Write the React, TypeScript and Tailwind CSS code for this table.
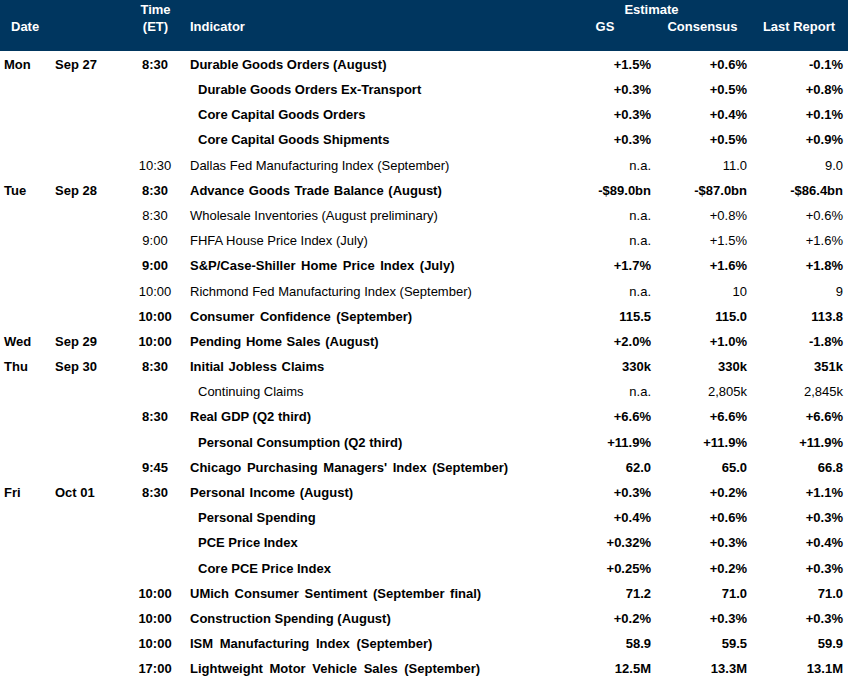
type Row = {
  day?: string;
  date?: string;
  time?: string;
  name: string;
  gs: string;
  cons: string;
  last: string;
  bold?: boolean;
  sub?: boolean;
  wide?: string;
};

const rows: Row[] = [
  { day: "Mon", date: "Sep 27", time: "8:30", name: "Durable Goods Orders (August)", gs: "+1.5%", cons: "+0.6%", last: "-0.1%", bold: true },
  { name: "Durable Goods Orders Ex-Transport", gs: "+0.3%", cons: "+0.5%", last: "+0.8%", bold: true, sub: true },
  { name: "Core Capital Goods Orders", gs: "+0.3%", cons: "+0.4%", last: "+0.1%", bold: true, sub: true },
  { name: "Core Capital Goods Shipments", gs: "+0.3%", cons: "+0.5%", last: "+0.9%", bold: true, sub: true },
  { time: "10:30", name: "Dallas Fed Manufacturing Index (September)", gs: "n.a.", cons: "11.0", last: "9.0" },
  { day: "Tue", date: "Sep 28", time: "8:30", name: "Advance Goods Trade Balance (August)", gs: "-$89.0bn", cons: "-$87.0bn", last: "-$86.4bn", bold: true, wide: "[word-spacing:1px]" },
  { time: "8:30", name: "Wholesale Inventories (August preliminary)", gs: "n.a.", cons: "+0.8%", last: "+0.6%" },
  { time: "9:00", name: "FHFA House Price Index (July)", gs: "n.a.", cons: "+1.5%", last: "+1.6%" },
  { time: "9:00", name: "S&P/Case-Shiller Home Price Index (July)", gs: "+1.7%", cons: "+1.6%", last: "+1.8%", bold: true, wide: "[word-spacing:2px]" },
  { time: "10:00", name: "Richmond Fed Manufacturing Index (September)", gs: "n.a.", cons: "10", last: "9" },
  { time: "10:00", name: "Consumer Confidence (September)", gs: "115.5", cons: "115.0", last: "113.8", bold: true, wide: "[word-spacing:2px]" },
  { day: "Wed", date: "Sep 29", time: "10:00", name: "Pending Home Sales (August)", gs: "+2.0%", cons: "+1.0%", last: "-1.8%", bold: true, wide: "[word-spacing:1px]" },
  { day: "Thu", date: "Sep 30", time: "8:30", name: "Initial Jobless Claims", gs: "330k", cons: "330k", last: "351k", bold: true, wide: "[word-spacing:1px]" },
  { name: "Continuing Claims", gs: "n.a.", cons: "2,805k", last: "2,845k", sub: true },
  { time: "8:30", name: "Real GDP (Q2 third)", gs: "+6.6%", cons: "+6.6%", last: "+6.6%", bold: true },
  { name: "Personal Consumption (Q2 third)", gs: "+11.9%", cons: "+11.9%", last: "+11.9%", bold: true, sub: true },
  { time: "9:45", name: "Chicago Purchasing Managers' Index (September)", gs: "62.0", cons: "65.0", last: "66.8", bold: true, wide: "[word-spacing:2px]" },
  { day: "Fri", date: "Oct 01", time: "8:30", name: "Personal Income (August)", gs: "+0.3%", cons: "+0.2%", last: "+1.1%", bold: true, wide: "[word-spacing:1px]" },
  { name: "Personal Spending", gs: "+0.4%", cons: "+0.6%", last: "+0.3%", bold: true, sub: true },
  { name: "PCE Price Index", gs: "+0.32%", cons: "+0.3%", last: "+0.4%", bold: true, sub: true },
  { name: "Core PCE Price Index", gs: "+0.25%", cons: "+0.2%", last: "+0.3%", bold: true, sub: true },
  { time: "10:00", name: "UMich Consumer Sentiment (September final)", gs: "71.2", cons: "71.0", last: "71.0", bold: true, wide: "[word-spacing:2px]" },
  { time: "10:00", name: "Construction Spending (August)", gs: "+0.2%", cons: "+0.3%", last: "+0.3%", bold: true },
  { time: "10:00", name: "ISM Manufacturing Index (September)", gs: "58.9", cons: "59.5", last: "59.9", bold: true, wide: "[word-spacing:3px]" },
  { time: "17:00", name: "Lightweight Motor Vehicle Sales (September)", gs: "12.5M", cons: "13.3M", last: "13.1M", bold: true, wide: "[word-spacing:3px]" },
];

const cols = "grid grid-cols-[50px_80px_50px_375px_100px_95px_98px]";

export default function App() {
  return (
    <div className="w-[848px] h-[683px] bg-white text-black text-[13px] font-['Liberation_Sans',Arial,sans-serif] overflow-hidden">
      <div className={`${cols} h-[51px] bg-[#00365f] text-white font-bold leading-[17px] pt-[1px]`}>
        <div className="pl-[11px] pt-[17px]">Date</div>
        <div />
        <div className="text-center pl-[1px]">
          Time
          <br />
          (ET)
        </div>
        <div className="pl-[10px] pt-[17px]">Indicator</div>
        <div className="col-span-2 flex flex-col">
          <div className="text-center pr-[2px]">Estimate</div>
          <div className="grid grid-cols-[100px_95px]">
            <div className="text-center">GS</div>
            <div className="text-center">Consensus</div>
          </div>
        </div>
        <div className="text-center pt-[17px]">Last Report</div>
      </div>

      <div className="pt-[1px]">
        {rows.map((r, i) => (
          <div
            key={i}
            className={`${cols} h-[25.2px] items-center ${r.bold ? "font-bold" : ""}`}
          >
            <div className="pl-[4px] font-bold">{r.day}</div>
            <div className="pl-[5px] font-bold">{r.date}</div>
            <div className="text-center">{r.time}</div>
            <div className={`whitespace-nowrap ${r.sub ? "pl-[18px]" : "pl-[10px]"} ${r.wide ?? ""}`}>
              {r.name}
            </div>
            <div className="text-right pr-[4px]">{r.gs}</div>
            <div className="text-right pr-[3px]">{r.cons}</div>
            <div className="text-right pr-[5px]">{r.last}</div>
          </div>
        ))}
      </div>
    </div>
  );
}
